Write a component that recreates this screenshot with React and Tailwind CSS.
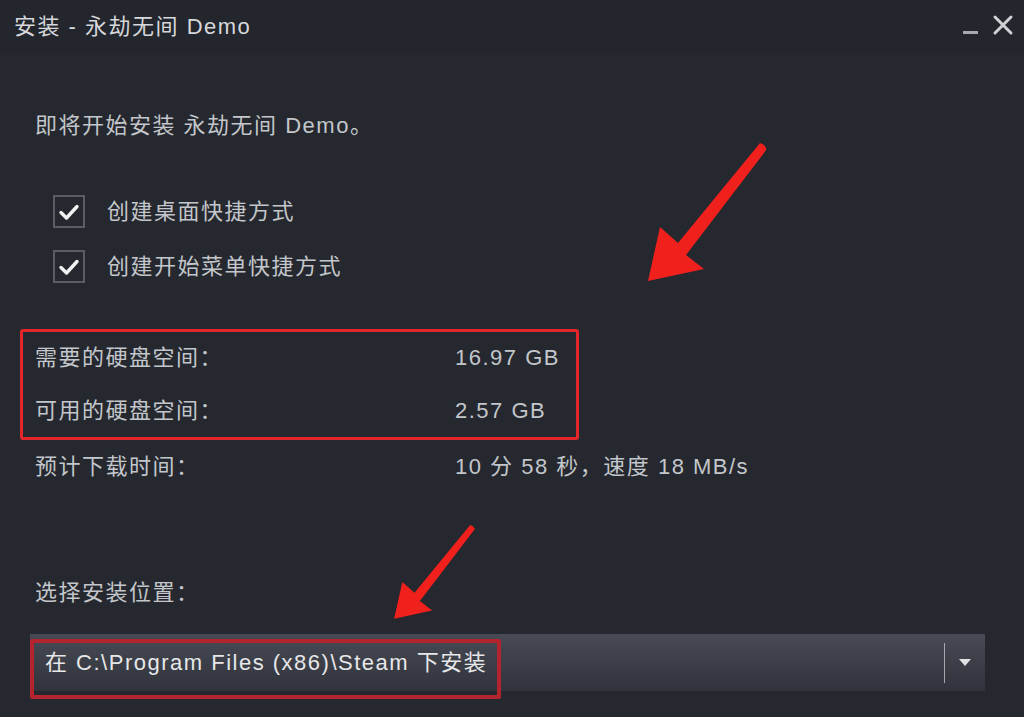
import React from 'react';

const font = { fontFamily: '"Liberation Sans", Arial, "Noto Sans CJK SC", sans-serif' };

const Check = () => (
  <div className="w-[32px] h-[33px] border-2 border-[#5a5d63] flex items-center justify-center">
    <svg width="22" height="18" viewBox="0 0 22 18" fill="none">
      <path d="M3 9.5 L8.5 15 L19 3.5" stroke="#f2f2f2" strokeWidth="3.4" strokeLinecap="round" strokeLinejoin="round" />
    </svg>
  </div>
);

const Arrow = ({ className }) => (
  <svg className={className} viewBox="0 0 120 140" fill="#f0201c">
    <path d="M118 2 L121 6 L40 112 L58 126 L2 138 L14 84 L32 100 L114 0 Z" />
  </svg>
);

export default function App() {
  return (
    <div
      className="relative w-[1024px] h-[717px] overflow-hidden bg-[#25282f] text-[#c3c6ca] text-[22px] tracking-[1.5px]"
      style={font}
    >
      {/* title bar */}
      <div className="h-[54px] flex items-center justify-between pl-[14px] pr-[10px] bg-[#23262d]">
        <span className="text-[#d6d8db] -mt-[2px]">安装 - 永劫无间 Demo</span>
        <div className="flex items-center gap-[14px] -mt-[4px]">
          <div className="w-[15px] h-[3px] bg-[#a7a9ad] mt-[14px]" />
          <svg width="22" height="22" viewBox="0 0 22 22" stroke="#d0d2d5" strokeWidth="3" strokeLinecap="round">
            <path d="M3 3 L19 19 M19 3 L3 19" />
          </svg>
        </div>
      </div>

      {/* body */}
      <div className="pl-[35px] pt-[58px] pr-[39px]">
        <div className="leading-[28px]">即将开始安装 永劫无间 Demo。</div>

        <div className="mt-[55px] pl-[18px] flex flex-col gap-[22px]">
          <label className="flex items-center gap-[22px]">
            <Check />
            <span>创建桌面快捷方式</span>
          </label>
          <label className="flex items-center gap-[22px]">
            <Check />
            <span>创建开始菜单快捷方式</span>
          </label>
        </div>

        <div className="mt-[46px] -ml-[15px] w-[559px] border-[3px] border-[#e3262a] rounded-[3px] pl-[12px] py-[12px] flex flex-col gap-[25px]">
          <div className="grid grid-cols-[420px_1fr] leading-[28px]">
            <span>需要的硬盘空间：</span>
            <span>16.97 GB</span>
          </div>
          <div className="grid grid-cols-[420px_1fr] leading-[28px]">
            <span>可用的硬盘空间：</span>
            <span>2.57 GB</span>
          </div>
        </div>

        <div className="mt-[13px] grid grid-cols-[420px_1fr] leading-[28px]">
          <span>预计下载时间：</span>
          <span>10 分 58 秒，速度 18 MB/s</span>
        </div>

        <div className="mt-[98px] leading-[28px]">选择安装位置：</div>

        {/* install location dropdown */}
        <div className="relative mt-[27px] -ml-[5px] h-[57px] bg-gradient-to-b from-[#484b55] to-[#30333b] flex items-center">
          <span className="pl-[15px] text-[#e6e7e9] flex-1">在 C:\Program Files (x86)\Steam 下安装</span>
          <div className="w-px h-[40px] bg-[#a5a7ab]" />
          <div className="w-[40px] flex justify-center">
            <svg width="12" height="8" viewBox="0 0 12 8" fill="#e0e1e3">
              <path d="M0 0 H12 L6 7 Z" />
            </svg>
          </div>
          <div className="absolute left-0 top-[5px] w-[471px] h-[60px] border-[4px] border-[#b3242f] rounded-[2px]" />
        </div>
      </div>

      {/* annotation arrows */}
      <Arrow className="absolute left-[646px] top-[143px] w-[120px] h-[140px]" />
      <Arrow className="absolute left-[386px] top-[525px] w-[95px] h-[95px]" />
    </div>
  );
}
